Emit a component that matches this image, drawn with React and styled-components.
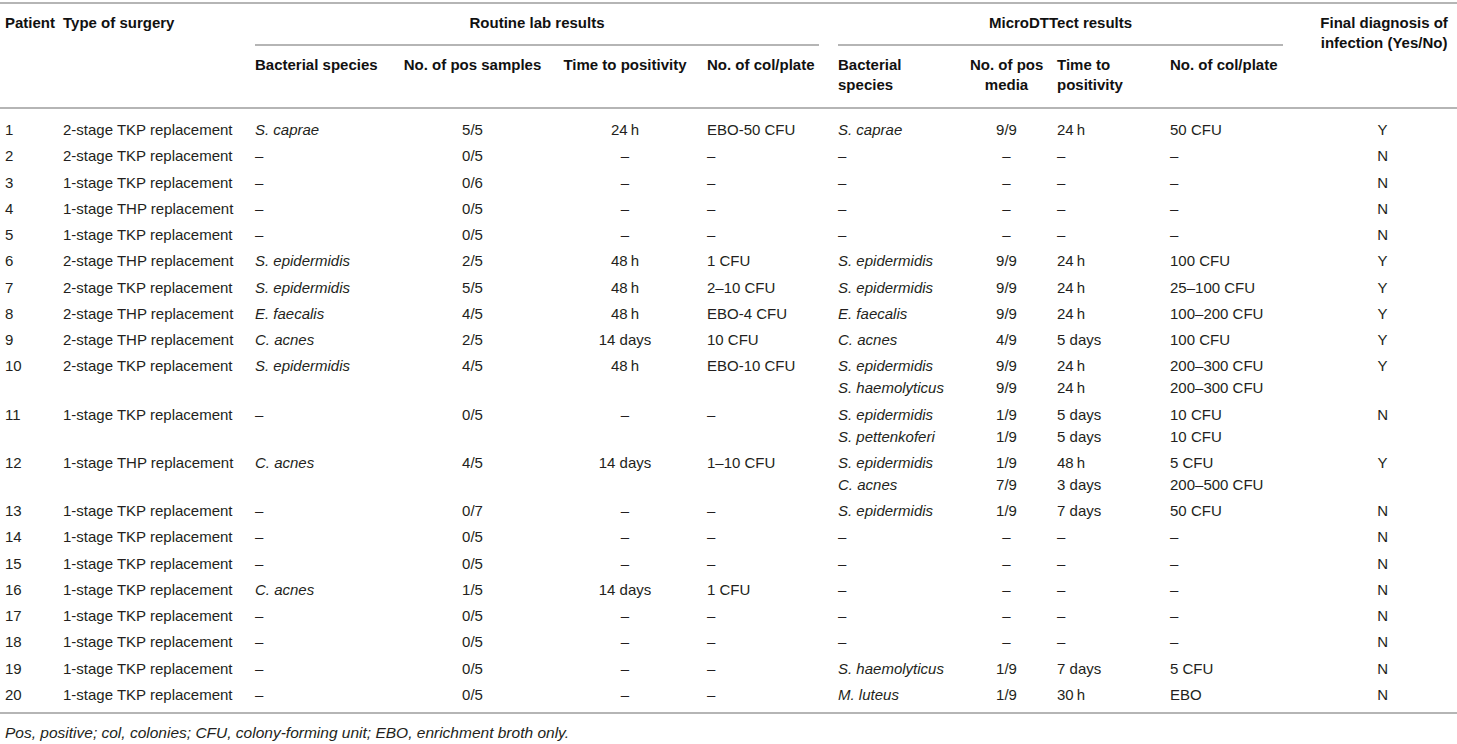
import React from "react";
import styled, { createGlobalStyle } from "styled-components";

const Global = createGlobalStyle`
  html, body { margin: 0; padding: 0; background: #ffffff; }
  body { font-family: "Liberation Sans", Arial, Helvetica, sans-serif; color: #231f20; }
`;

const RULE = "2px solid #b5b5b5";

const Page = styled.div`
  width: 1457px;
  padding-top: 2px;
`;

const Table = styled.table`
  width: 1457px;
  table-layout: fixed;
  border-collapse: separate;
  border-spacing: 0;
  font-size: 15px;
`;

const Col = styled.col`
  width: ${(p) => p.$w}px;
`;

const HeadCell = styled.th`
  font-weight: 700;
  color: #111;
  line-height: 20px;
  white-space: nowrap;
  vertical-align: top;
  text-align: ${(p) => p.$align || "left"};
  padding: 9px ${(p) => p.$pr ?? 14}px ${(p) => (p.$sub ? "12px" : "0")}
    ${(p) => p.$pl ?? 5}px;
  border-top: ${(p) => (p.$top ? RULE : "none")};
  border-bottom: ${(p) => (p.$bottom ? RULE : "none")};
`;

const GroupLabel = styled.div`
  text-align: center;
  padding-bottom: 11px;
  border-bottom: ${RULE};
`;

const Row = styled.tr``;

const Cell = styled.td`
  font-weight: 400;
  line-height: 22px;
  white-space: nowrap;
  vertical-align: top;
  text-align: ${(p) => p.$align || "left"};
  padding: ${(p) => (p.$first ? 10 : 2.13)}px ${(p) => p.$pr ?? 14}px
    ${(p) => (p.$last ? 6 : 2.13)}px ${(p) => p.$pl ?? 5}px;
  border-bottom: ${(p) => (p.$last ? RULE : "none")};
`;

const Line = styled.div``;

const Species = styled.span`
  font-style: italic;
`;

const Footnote = styled.p`
  margin: 9px 0 0;
  padding-left: 5px;
  font-size: 15.5px;
  line-height: 20px;
  font-style: italic;
  color: #231f20;
`;

const D = "–";
const h = (n) => `${n}\u2009h`;

const rows = [
  ["1", "2-stage TKP replacement", "S. caprae", "5/5", h(24), "EBO-50 CFU", ["S. caprae"], ["9/9"], [h(24)], ["50 CFU"], "Y"],
  ["2", "2-stage TKP replacement", D, "0/5", D, D, [D], [D], [D], [D], "N"],
  ["3", "1-stage TKP replacement", D, "0/6", D, D, [D], [D], [D], [D], "N"],
  ["4", "1-stage THP replacement", D, "0/5", D, D, [D], [D], [D], [D], "N"],
  ["5", "1-stage TKP replacement", D, "0/5", D, D, [D], [D], [D], [D], "N"],
  ["6", "2-stage THP replacement", "S. epidermidis", "2/5", h(48), "1 CFU", ["S. epidermidis"], ["9/9"], [h(24)], ["100 CFU"], "Y"],
  ["7", "2-stage TKP replacement", "S. epidermidis", "5/5", h(48), "2–10 CFU", ["S. epidermidis"], ["9/9"], [h(24)], ["25–100 CFU"], "Y"],
  ["8", "2-stage THP replacement", "E. faecalis", "4/5", h(48), "EBO-4 CFU", ["E. faecalis"], ["9/9"], [h(24)], ["100–200 CFU"], "Y"],
  ["9", "2-stage THP replacement", "C. acnes", "2/5", "14 days", "10 CFU", ["C. acnes"], ["4/9"], ["5 days"], ["100 CFU"], "Y"],
  ["10", "2-stage TKP replacement", "S. epidermidis", "4/5", h(48), "EBO-10 CFU", ["S. epidermidis", "S. haemolyticus"], ["9/9", "9/9"], [h(24), h(24)], ["200–300 CFU", "200–300 CFU"], "Y"],
  ["11", "1-stage TKP replacement", D, "0/5", D, D, ["S. epidermidis", "S. pettenkoferi"], ["1/9", "1/9"], ["5 days", "5 days"], ["10 CFU", "10 CFU"], "N"],
  ["12", "1-stage THP replacement", "C. acnes", "4/5", "14 days", "1–10 CFU", ["S. epidermidis", "C. acnes"], ["1/9", "7/9"], [h(48), "3 days"], ["5 CFU", "200–500 CFU"], "Y"],
  ["13", "1-stage TKP replacement", D, "0/7", D, D, ["S. epidermidis"], ["1/9"], ["7 days"], ["50 CFU"], "N"],
  ["14", "1-stage TKP replacement", D, "0/5", D, D, [D], [D], [D], [D], "N"],
  ["15", "1-stage TKP replacement", D, "0/5", D, D, [D], [D], [D], [D], "N"],
  ["16", "1-stage TKP replacement", "C. acnes", "1/5", "14 days", "1 CFU", [D], [D], [D], [D], "N"],
  ["17", "1-stage TKP replacement", D, "0/5", D, D, [D], [D], [D], [D], "N"],
  ["18", "1-stage TKP replacement", D, "0/5", D, D, [D], [D], [D], [D], "N"],
  ["19", "1-stage TKP replacement", D, "0/5", D, D, ["S. haemolyticus"], ["1/9"], ["7 days"], ["5 CFU"], "N"],
  ["20", "1-stage TKP replacement", D, "0/5", D, D, ["M. luteus"], ["1/9"], [h(30)], ["EBO"], "N"],
];

const widths = [58, 192, 147, 160, 145, 131, 132, 87, 113, 132, 160];

const sp = (v) => (v === D ? v : <Species>{v}</Species>);
const lines = (arr, italic) =>
  arr.map((v, i) => <Line key={i}>{italic ? sp(v) : v}</Line>);

export default function App() {
  const n = rows.length;
  return (
    <Page>
      <Global />
      <Table>
        <colgroup>
          {widths.map((w, i) => (
            <Col key={i} $w={w} />
          ))}
        </colgroup>
        <thead>
          <tr>
            <HeadCell rowSpan={2} $top $bottom $sub $pr={5}>Patient</HeadCell>
            <HeadCell rowSpan={2} $top $bottom $sub>Type of surgery</HeadCell>
            <HeadCell colSpan={4} $top>
              <GroupLabel>Routine lab results</GroupLabel>
            </HeadCell>
            <HeadCell colSpan={4} $top>
              <GroupLabel>MicroDTTect results</GroupLabel>
            </HeadCell>
            <HeadCell rowSpan={2} $top $bottom $sub $align="center" $pl={22} $pr={8}>
              Final diagnosis of
              <br />
              infection (Yes/No)
            </HeadCell>
          </tr>
          <tr>
            <HeadCell $sub $bottom>Bacterial species</HeadCell>
            <HeadCell $sub $bottom $align="center">No. of pos samples</HeadCell>
            <HeadCell $sub $bottom $align="center">Time to positivity</HeadCell>
            <HeadCell $sub $bottom>No. of col/plate</HeadCell>
            <HeadCell $sub $bottom>
              Bacterial
              <br />
              species
            </HeadCell>
            <HeadCell $sub $bottom $align="center" $pr={9}>
              No. of pos
              <br />
              media
            </HeadCell>
            <HeadCell $sub $bottom>
              Time to
              <br />
              positivity
            </HeadCell>
            <HeadCell $sub $bottom>No. of col/plate</HeadCell>
          </tr>
        </thead>
        <tbody>
          {rows.map((r, i) => {
            const f = i === 0;
            const l = i === n - 1;
            return (
              <Row key={r[0]}>
                <Cell $first={f} $last={l} $pr={5}>{r[0]}</Cell>
                <Cell $first={f} $last={l}>{r[1]}</Cell>
                <Cell $first={f} $last={l}>{sp(r[2])}</Cell>
                <Cell $first={f} $last={l} $align="center">{r[3]}</Cell>
                <Cell $first={f} $last={l} $align="center">{r[4]}</Cell>
                <Cell $first={f} $last={l}>{r[5]}</Cell>
                <Cell $first={f} $last={l}>{lines(r[6], true)}</Cell>
                <Cell $first={f} $last={l} $align="center" $pr={9}>{lines(r[7])}</Cell>
                <Cell $first={f} $last={l}>{lines(r[8])}</Cell>
                <Cell $first={f} $last={l}>{lines(r[9])}</Cell>
                <Cell $first={f} $last={l} $align="center" $pl={25}>{r[10]}</Cell>
              </Row>
            );
          })}
        </tbody>
      </Table>
      <Footnote>
        Pos, positive; col, colonies; CFU, colony-forming unit; EBO, enrichment broth only.
      </Footnote>
    </Page>
  );
}
